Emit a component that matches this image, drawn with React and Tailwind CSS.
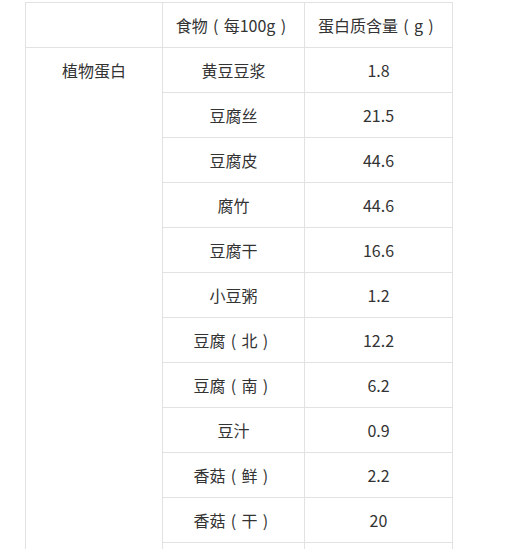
function P({ c }) {
  return <span className="inline-block w-[1em] text-center">{c}</span>;
}

function T({ s }) {
  const parts = [];
  let buf = "";
  for (let i = 0; i < s.length; i++) {
    const ch = s[i];
    if (ch === "（" || ch === "）") {
      if (buf) parts.push(buf);
      buf = "";
      parts.push(<P key={i} c={ch === "（" ? "(" : ")"} />);
    } else {
      buf += ch;
    }
  }
  if (buf) parts.push(buf);
  return <>{parts}</>;
}

export default function App() {
  const rows = [
    ["黄豆豆浆", "1.8"],
    ["豆腐丝", "21.5"],
    ["豆腐皮", "44.6"],
    ["腐竹", "44.6"],
    ["豆腐干", "16.6"],
    ["小豆粥", "1.2"],
    ["豆腐（北）", "12.2"],
    ["豆腐（南）", "6.2"],
    ["豆汁", "0.9"],
    ["香菇（鲜）", "2.2"],
    ["香菇（干）", "20"],
  ];
  const cell = "border border-[#e2e2e2] text-center align-middle p-0";
  return (
    <div
      className="w-[512px] h-[549px] overflow-hidden bg-white pt-[2px] pl-[25px] text-[#333] text-[16px]"
      style={{ fontFamily: '"Microsoft YaHei", "Noto Sans CJK SC", sans-serif' }}
    >
      <table className="border-collapse table-fixed w-[427px]">
        <colgroup>
          <col className="w-[137px]" />
          <col className="w-[142px]" />
          <col className="w-[148px]" />
        </colgroup>
        <tbody>
          <tr className="h-[45px]">
            <td className={cell}></td>
            <td className={cell}><T s="食物（每100g）" /></td>
            <td className={cell}><T s="蛋白质含量（g）" /></td>
          </tr>
          {rows.map((r, i) => (
            <tr key={i} className="h-[45px]">
              {i === 0 && (
                <td
                  rowSpan={rows.length + 1}
                  className="border border-[#e2e2e2] text-center align-top p-0 pt-[10px]"
                >
                  植物蛋白
                </td>
              )}
              <td className={cell}><T s={r[0]} /></td>
              <td className={cell}>{r[1]}</td>
            </tr>
          ))}
          <tr className="h-[45px]">
            <td className={cell}></td>
            <td className={cell}></td>
          </tr>
        </tbody>
      </table>
    </div>
  );
}
